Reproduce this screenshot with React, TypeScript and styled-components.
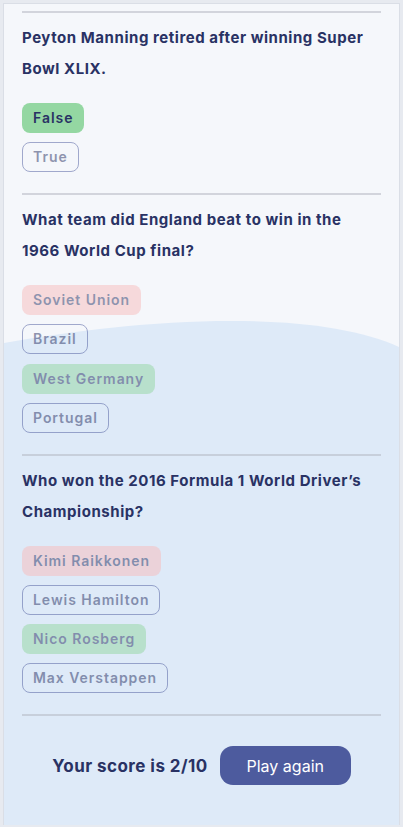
import React from "react";
import styled, { createGlobalStyle } from "styled-components";

const Global = createGlobalStyle`
  html, body { margin: 0; padding: 0; }
  body {
    background: #e7eaf0;
    font-family: "Inter", "Noto Sans", sans-serif;
    color: #293264;
  }
  * { box-sizing: border-box; }
`;

const Page = styled.div`
  padding: 3px 3px 0 3px;
`;

const Card = styled.main`
  position: relative;
  overflow: hidden;
  background: #f5f7fb;
  border: 1px solid #dadee6;
  border-bottom: none;
  padding: 7px 18px 40px 18px;
`;

const Blob = styled.div`
  position: absolute;
  left: 0;
  right: 0;
  top: 311px;
  bottom: 0;
  display: flex;
  flex-direction: column;
  pointer-events: none;
`;

const BlobFill = styled.div`
  flex: 1;
  background: #deeaf8;
`;

const Content = styled.div`
  position: relative;
`;

const Section = styled.section`
  border-top: 2px solid rgba(180, 184, 194, 0.55);
  padding: 9px 0 21px 0;
`;

const Question = styled.h2`
  margin: 0 0 19px 0;
  font-family: "Inter", "Noto Sans", sans-serif;
  font-size: 15px;
  font-weight: 700;
  line-height: 31px;
  color: #293264;
  letter-spacing: 0.55px;
`;

const Answers = styled.div`
  display: flex;
  flex-direction: column;
  align-items: flex-start;
  gap: 9.2px;
`;

type Kind = "correct" | "wrong" | "right" | "plain";

const Answer = styled.button<{ $kind: Kind; $faded: boolean }>`
  font-family: "Inter", "Noto Sans", sans-serif;
  font-size: 14px;
  font-weight: 600;
  line-height: 18px;
  height: 30px;
  padding: 5px 10px;
  border-radius: 8px;
  color: #293264;
  border: 1px solid
    ${(p) => (p.$kind === "plain" ? "#4d5b9e" : "transparent")};
  background: ${(p) =>
    p.$kind === "wrong"
      ? "#f8bcbc"
      : p.$kind === "plain"
      ? "transparent"
      : "#94d7a2"};
  opacity: ${(p) => (p.$faded ? 0.5 : 1)};
  letter-spacing: 0.95px;
  cursor: pointer;
`;

const Footer = styled.div`
  border-top: 2px solid rgba(180, 184, 194, 0.55);
  padding-top: 30px;
  display: flex;
  justify-content: center;
  align-items: center;
  gap: 12px;
`;

const Score = styled.p`
  margin: 0;
  font-family: "Inter", "Noto Sans", sans-serif;
  font-size: 17px;
  font-weight: 700;
  letter-spacing: 0.45px;
  color: #293264;
`;

const PlayButton = styled.button`
  width: 131px;
  height: 39px;
  border-radius: 13px;
  border: none;
  background: #4d5b9e;
  color: #ffffff;
  font-family: "Inter", "Noto Sans", sans-serif;
  font-size: 16px;
  font-weight: 400;
  cursor: pointer;
`;

type Opt = { text: string; kind: Kind; faded: boolean };
type Q = { question: string; options: Opt[] };

const questions: Q[] = [
  {
    question: "Peyton Manning retired after winning Super Bowl XLIX.",
    options: [
      { text: "False", kind: "correct", faded: false },
      { text: "True", kind: "plain", faded: true },
    ],
  },
  {
    question: "What team did England beat to win in the 1966 World Cup final?",
    options: [
      { text: "Soviet Union", kind: "wrong", faded: true },
      { text: "Brazil", kind: "plain", faded: true },
      { text: "West Germany", kind: "right", faded: true },
      { text: "Portugal", kind: "plain", faded: true },
    ],
  },
  {
    question: "Who won the 2016 Formula 1 World Driver\u2019s Championship?",
    options: [
      { text: "Kimi Raikkonen", kind: "wrong", faded: true },
      { text: "Lewis Hamilton", kind: "plain", faded: true },
      { text: "Nico Rosberg", kind: "right", faded: true },
      { text: "Max Verstappen", kind: "plain", faded: true },
    ],
  },
];

export default function App() {
  return (
    <>
      <Global />
      <Page>
        <Card>
          <Blob>
            <svg width="100%" height="32" viewBox="0 0 400 32" preserveAspectRatio="none">
              <path
                d="M0 28 C 70 16, 150 6, 230 6 C 300 6, 360 14, 400 32 L 400 32 L 0 32 Z"
                fill="#deeaf8"
              />
            </svg>
            <BlobFill />
          </Blob>
          <Content>
            {questions.map((q) => (
              <Section key={q.question}>
                <Question>{q.question}</Question>
                <Answers>
                  {q.options.map((o) => (
                    <Answer key={o.text} $kind={o.kind} $faded={o.faded}>
                      {o.text}
                    </Answer>
                  ))}
                </Answers>
              </Section>
            ))}
            <Footer>
              <Score>Your score is 2/10</Score>
              <PlayButton>Play again</PlayButton>
            </Footer>
          </Content>
        </Card>
      </Page>
    </>
  );
}
